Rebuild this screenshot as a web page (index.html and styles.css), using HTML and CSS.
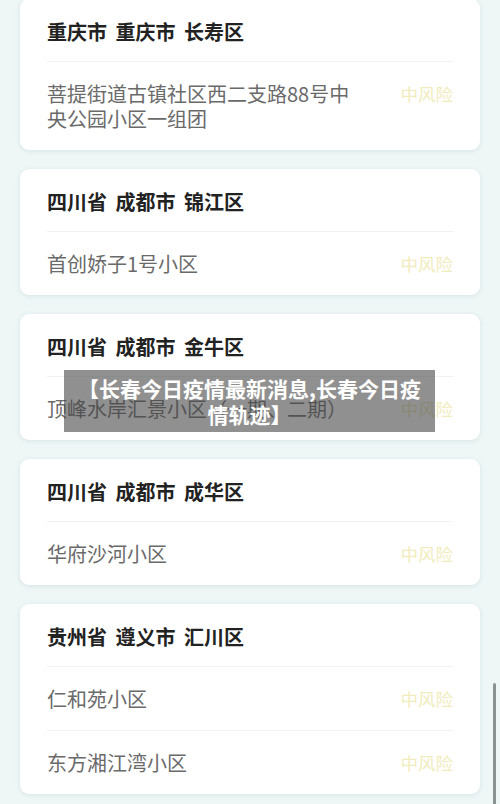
FILE: index.html
```html
<!DOCTYPE html>
<html lang="zh-CN">
<head>
  <meta charset="UTF-8">
  <meta name="viewport" content="width=device-width, initial-scale=1.0">
  <title>长春今日疫情最新消息</title>
  <link rel="stylesheet" href="styles.css">
</head>
<body>

  <div class="list">
    <!-- 重庆 -->
    <div class="card">
      <div class="card-title">重庆市 重庆市 长寿区</div>
      <div class="row">
        <span class="place">菩提街道古镇社区西二支路88号中央公园小区一组团</span>
        <span class="risk">中风险</span>
      </div>
    </div>

    <div class="card">
      <div class="card-title">四川省 成都市 锦江区</div>
      <div class="row">
        <span class="place">首创娇子1号小区</span>
        <span class="risk">中风险</span>
      </div>
    </div>

    <div class="card">
      <div class="card-title">四川省 成都市 金牛区</div>
      <div class="row">
        <span class="place">顶峰水岸汇景小区（一期、二期）</span>
        <span class="risk">中风险</span>
      </div>
    </div>

    <div class="card">
      <div class="card-title">四川省 成都市 成华区</div>
      <div class="row">
        <span class="place">华府沙河小区</span>
        <span class="risk">中风险</span>
      </div>
    </div>

    <div class="card">
      <div class="card-title">贵州省 遵义市 汇川区</div>
      <div class="row">
        <span class="place">仁和苑小区</span>
        <span class="risk">中风险</span>
      </div>
      <div class="row">
        <span class="place">东方湘江湾小区</span>
        <span class="risk">中风险</span>
      </div>
    </div>
  </div>

  <!-- caption box over the screenshot -->
  <div class="caption">【长春今日疫情最新消息,长春今日疫情轨迹】</div>

  <!-- fake scrollbar -->
  <div class="scrollbar"></div>

</body>
</html>
```

FILE: styles.css
```css
/* Page */
body {
  margin: 0;
  height: 804px;
  overflow: hidden;
  position: relative;
  background: #eef6f6;
  font-family: "Noto Sans CJK SC", "Noto Sans", sans-serif;
}

.list {
  display: flex;
  flex-direction: column;
  gap: 19px;
  padding: 0 20px;
  margin-top: -1px;
}

/* Cards */
.card {
  background: #ffffff;
  border-radius: 9px;
  padding: 0 27px;
  box-shadow: 0 1px 4px rgba(150, 175, 175, 0.25);
}

.card-title {
  padding: 20px 0 16px;
  font-size: 20px;
  line-height: 26px;
  font-weight: bold;
  word-spacing: 4px;
  color: #222222;
}

.row {
  display: flex;
  justify-content: space-between;
  align-items: flex-start;
  border-top: 1px solid #f1f3f3;
  padding: 19px 0;
  font-size: 20px;
  line-height: 25px;
}

.place {
  max-width: 310px;
  color: #6a6a6a;
}

.risk {
  font-size: 17.5px;
  color: #f1ecbd;
  white-space: nowrap;
}

/* Caption overlay */
.caption {
  position: absolute;
  left: 64px;
  top: 370px;
  width: 371px;
  box-sizing: border-box;
  padding: 5px 10px;
  background: rgba(70, 70, 70, 0.6);
  color: #ffffff;
  font-size: 21px;
  line-height: 26px;
  font-weight: bold;
  text-align: center;
}

/* Scrollbar */
.scrollbar {
  position: absolute;
  right: 4px;
  top: 683px;
  width: 3px;
  height: 130px;
  border-radius: 2px;
  background: #8c9191;
}
```
